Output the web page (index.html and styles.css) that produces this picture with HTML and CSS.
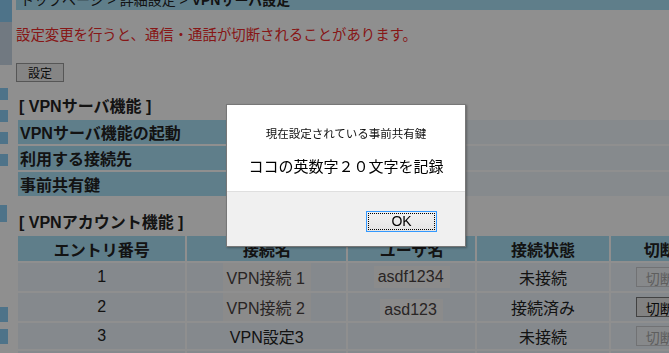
FILE: index.html
```html
<!DOCTYPE html>
<html lang="ja">
<head>
    <meta charset="UTF-8">
    <meta name="viewport" content="width=device-width, initial-scale=1.0">
    <title>VPNサーバ設定</title>
    <link rel="stylesheet" href="styles.css">
</head>
<body>
    <div class="page">
        <div class="sidebar">
            <div class="side-top"></div>
            <div class="side-sub"></div>
            <div class="side-tab first"></div>
            <div class="side-tab"></div>
            <div class="side-tab"></div>
            <div class="side-tab"></div>
            <div class="side-tab tall"></div>
            <div class="side-tab low"></div>
            <div class="side-tab mid"></div>
        </div>

        <div class="content">
            <div class="breadcrumb">トップページ &gt; 詳細設定 &gt; <b>VPNサーバ設定</b></div>

            <p class="warning">設定変更を行うと、通信・通話が切断されることがあります。</p>

            <button class="btn">設定</button>

            <h3 class="section-title">[ VPNサーバ機能 ]</h3>
            <table class="settings">
                <tr><th>VPNサーバ機能の起動</th><td></td></tr>
                <tr><th>利用する接続先</th><td></td></tr>
                <tr><th>事前共有鍵</th><td></td></tr>
            </table>

            <h3 class="section-title">[ VPNアカウント機能 ]</h3>
            <table class="accounts">
                <colgroup>
                    <col class="c-entry">
                    <col class="c-name">
                    <col class="c-user">
                    <col class="c-state">
                    <col class="c-cut">
                </colgroup>
                <tr>
                    <th>エントリ番号</th>
                    <th>接続名</th>
                    <th>ユーザ名</th>
                    <th>接続状態</th>
                    <th>切断</th>
                </tr>
                <tr>
                    <td>1</td>
                    <td><span class="field">VPN接続 1</span></td>
                    <td><span class="field">asdf1234</span></td>
                    <td>未接続</td>
                    <td><button class="cut" disabled>切断</button></td>
                </tr>
                <tr>
                    <td>2</td>
                    <td><span class="field">VPN接続 2</span></td>
                    <td><span class="field low">asd123</span></td>
                    <td>接続済み</td>
                    <td><button class="cut">切断</button></td>
                </tr>
                <tr>
                    <td>3</td>
                    <td>VPN設定3</td>
                    <td></td>
                    <td>未接続</td>
                    <td><button class="cut" disabled>切断</button></td>
                </tr>
                <tr>
                    <td>4</td>
                    <td>テスト</td>
                    <td></td>
                    <td>未接続</td>
                    <td><button class="cut" disabled>切断</button></td>
                </tr>
            </table>
        </div>
    </div>

    <div class="overlay"></div>

    <div class="dialog">
        <div class="dialog-body">
            <p class="dialog-title">現在設定されている事前共有鍵</p>
            <p class="dialog-msg">ココの英数字２０文字を記録</p>
        </div>
        <div class="dialog-foot">
            <button class="ok">OK</button>
        </div>
    </div>
</body>
</html>
```

FILE: styles.css
```css
body {
    font-family: "Liberation Sans", "Noto Sans CJK JP", sans-serif;
    background-color: #fff;
    color: #222;
    margin: 0;
    padding: 0;
    width: 669px;
    height: 353px;
    overflow: hidden;
}
.page {
    display: flex;
    gap: 4px;
}
.sidebar {
    width: 12px;
    flex: none;
    display: flex;
    flex-direction: column;
}
.side-top {
    height: 22px;
    background-color: #8ccdf5;
}
.side-sub {
    height: 43px;
    background-color: #c9d8e6;
}
.side-tab {
    width: 8px;
    height: 12px;
    margin-top: 10px;
    background-color: #8ccdf5;
}
.side-tab.first {
    margin-top: 23px;
}
.side-tab.tall {
    width: 7px;
    height: 17px;
    margin-top: 39px;
}
.side-tab.low {
    height: 15px;
    margin-top: 85px;
}
.side-tab.mid {
    height: 15px;
    margin-top: 7px;
}
.content {
    flex: 1;
    min-width: 0;
}
.breadcrumb {
    margin-top: -20px;
    height: 16px;
    padding: 12px 4px 2px;
    background-color: #a9e0f7;
    font-size: 14px;
    line-height: 16px;
}
.warning {
    margin: 15px 0 0;
    font-size: 14.4px;
    line-height: 20px;
    color: #f02a2a;
}
.btn {
    display: block;
    margin: 18px 0 0;
    width: 48px;
    height: 19px;
    padding: 0;
    font-family: inherit;
    font-size: 12px;
    border: 1px solid #9a9a9a;
    background-color: #eeeeee;
    color: #111;
}
.section-title {
    margin: 15px 0 2px 3px;
    font-size: 16px;
    line-height: 19px;
    color: #222;
}
table {
    border-spacing: 2px;
}
.settings {
    width: 655px;
}
.settings th {
    width: 260px;
    height: 24px;
    padding: 0 0 0 2px;
    text-align: left;
    font-size: 16px;
    background-color: #a9e0f7;
}
.settings td {
    background-color: #eff6fb;
}
.accounts {
    width: 695px;
    table-layout: fixed;
    margin-top: 0;
}
.c-entry { width: 167px; }
.c-name { width: 158px; }
.c-user { width: 127px; }
.c-state { width: 131px; }
.c-cut { width: 98px; }
.accounts th {
    height: 25px;
    padding: 0;
    font-size: 16px;
    background-color: #a9e0f7;
}
.accounts td {
    height: 26px;
    padding: 0;
    text-align: center;
    font-size: 16px;
    background-color: #eef5fb;
}
.field {
    display: inline-block;
    padding: 2px 6px 2px 4px;
    background-color: #f8f8f8;
    color: #4a4242;
}
.field.low {
    position: relative;
    top: 3px;
}
.cut {
    width: 48px;
    height: 20px;
    padding: 0;
    font-family: inherit;
    font-size: 14px;
    border: 1px solid #777;
    background-color: #e8e8e8;
    color: #111;
}
.cut:disabled {
    border-color: #c9cccf;
    background-color: #f0f4f8;
    color: #a8a8a8;
}
.overlay {
    position: fixed;
    top: 0;
    left: 0;
    right: 0;
    bottom: 0;
    background-color: rgba(0, 0, 0, 0.44);
}
.dialog {
    position: absolute;
    left: 226px;
    top: 104px;
    width: 238px;
    border: 1px solid #777;
    background-color: #fff;
    box-shadow: 1px 1px 2px rgba(0, 0, 0, 0.3);
    font-family: "Noto Sans CJK JP", "Liberation Sans", sans-serif;
}
.dialog-body {
    height: 86px;
    padding-top: 20px;
    box-sizing: border-box;
    text-align: center;
}
.dialog-title {
    margin: 0;
    font-size: 11.5px;
    line-height: 16px;
    color: #111;
}
.dialog-msg {
    margin: 15px 0 0;
    font-size: 15px;
    line-height: 20px;
    color: #000;
}
.dialog-foot {
    height: 55px;
    border-top: 1px solid #dfdfdf;
    background-color: #f0f0f0;
    padding: 15px 28px 0 0;
    box-sizing: border-box;
    text-align: right;
}
.ok {
    width: 71px;
    height: 21px;
    padding: 0;
    font-family: "Liberation Sans", sans-serif;
    font-size: 14px;
    border: 1px solid #3399ff;
    background: linear-gradient(#f2f2f2, #e4e4e4);
    outline: 1px dotted #000;
    outline-offset: -3px;
    color: #000;
}
```
